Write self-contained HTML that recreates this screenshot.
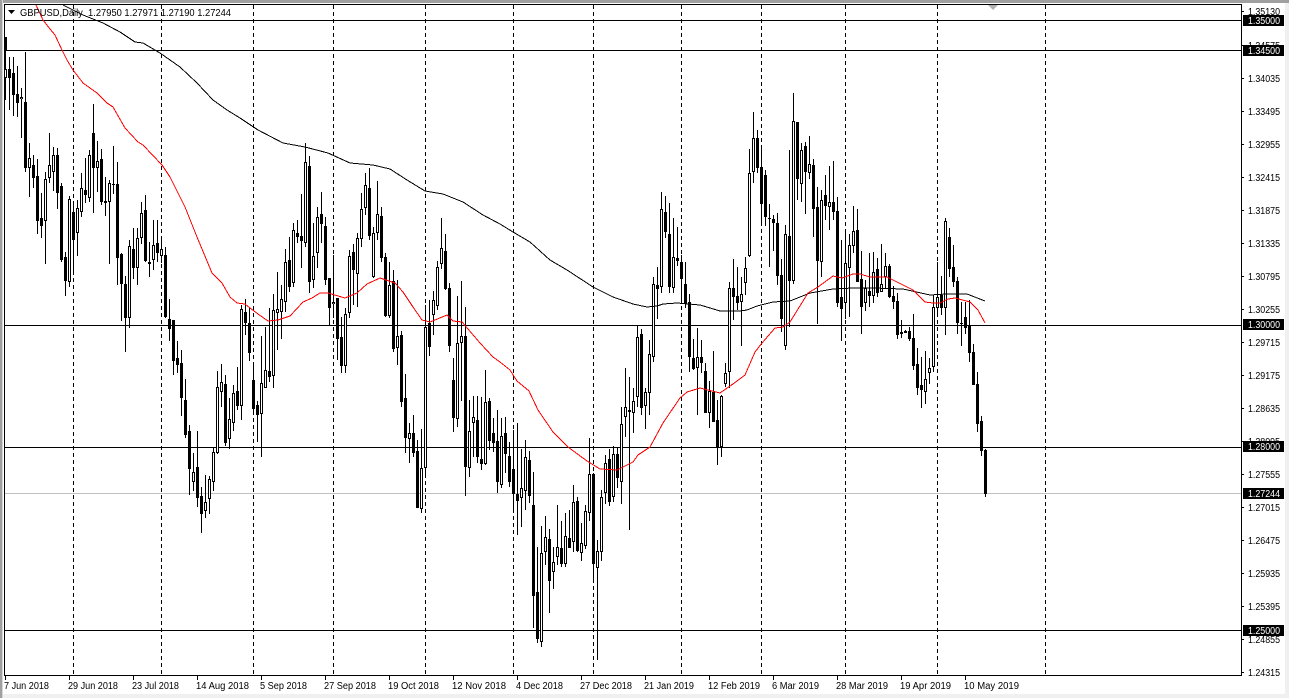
<!DOCTYPE html>
<html><head><meta charset="utf-8"><title>GBPUSD,Daily</title>
<style>
html,body{margin:0;padding:0;background:#fff;width:1289px;height:698px;overflow:hidden}
svg{display:block;position:absolute;left:0;top:0}
text{font-family:"Liberation Sans",Arial,sans-serif;font-size:10px;fill:#000}
.l text{fill:#fff}
</style></head><body>
<svg width="1289" height="698" viewBox="0 0 1289 698" xmlns="http://www.w3.org/2000/svg">
<rect width="1289" height="698" fill="#fff"/>
<rect x="0" y="694" width="1289" height="4" fill="#f0f0f0"/>
<rect x="1285" y="0" width="4" height="698" fill="#f0f0f0"/>
<rect x="0" y="0" width="1289" height="3" fill="#a0a0a0"/>
<rect x="0" y="0" width="2" height="698" fill="#a0a0a0"/>
<rect x="2" y="0" width="1" height="698" fill="#d8d8d8"/>

<g shape-rendering="crispEdges">
<!-- vertical dashed grid -->
<path transform="translate(.5,0)" fill="none" stroke="#000" stroke-width="1" stroke-dasharray="4 3" d="M73 5V675M161 5V675M253 5V675M333 5V675M425 5V675M513 5V675M593 5V675M681 5V675M761 5V675M845 5V675M937 5V675M1045 5V675"/>
<!-- horizontal levels -->
<rect x="5" y="493" width="1237" height="1" fill="#c0c0c0"/>
<rect x="5" y="20" width="1237" height="1" fill="#000"/>
<rect x="5" y="50" width="1237" height="1" fill="#000"/>
<rect x="5" y="325" width="1237" height="1" fill="#000"/>
<rect x="5" y="447" width="1237" height="1" fill="#000"/>
<rect x="5" y="630" width="1237" height="1" fill="#000"/>

<g transform="translate(.5,0)" fill="none" stroke="#000">
<!-- wicks -->
<path stroke-width="1" d="M5 37V100M9 57V110M13 57V116M17 66V117M21 88V138M25 52V172M29 143V197M33 155V188M37 159V234M41 193V238M45 172V264M49 133V183M53 147V191M57 148V209M61 183V262M65 252V296M69 196V287M73 203V271M77 200V256M81 173V217M85 158V203M89 150V202M93 104V213M97 141V192M101 149V205M105 177V216M109 180V264M113 146V194M117 162V285M121 253V321M125 276V352M129 240V328M133 228V279M137 228V285M141 202V244M145 195V262M149 242V277M153 220V270M157 220V262M161 237V263M165 247V318M169 299V341M173 320V375M177 341V373M181 350V416M185 379V438M189 425V495M193 453V491M197 431V507M201 487V533M205 475V518M209 476V514M213 447V491M217 371V454M221 364V407M225 375V446M229 398V449M233 385V431M237 367V410M241 305V420M245 299V335M249 307V361M253 363V415M257 401V442M261 336V457M265 327V388M269 308V382M273 294V388M277 272V350M281 285V339M285 249V312M289 237V292M293 223V287M297 220V243M301 194V268M305 143V247M309 156V293M313 223V288M317 207V268M321 192V243M325 217V285M329 278V325M333 255V318M337 298V360M341 317V373M345 308V373M349 250V318M353 244V305M357 233V307M361 193V247M365 173V215M369 168V240M373 227V278M377 181V240M381 207V262M385 253V317M389 262V318M393 270V352M397 280V365M401 331V407M405 374V453M409 423V463M413 415V457M417 440V508M421 429V513M425 305V477M429 300V356M433 291V335M437 261V310M441 218V269M445 234V290M449 283V352M453 358V432M457 296V427M461 281V401M465 307V496M469 400V477M473 396V457M477 396V463M481 397V470M485 370V465M489 398V450M493 418V452M497 410V493M501 418V488M505 417V473M509 442V487M513 430V511M517 423V535M521 449V527M525 440V510M529 451V503M533 472V628M537 547V643M541 526V647M545 516V565M549 529V613M553 547V589M557 505V565M561 521V567M565 513V567M569 510V548M573 485V552M577 497V552M581 523V561M585 505V549M589 438V521M593 473V583M597 540V660M601 490V561M605 455V504M609 449V506M613 446V502M617 448V488M621 407V504M625 368V437M629 377V530M633 388V433M637 326V407M641 329V415M645 388V429M649 340V415M653 277V362M657 267V319M661 192V293M665 196V238M669 203V293M673 218V293M677 227V266M681 255V301M685 262V308M689 294V372M693 339V370M697 328V415M701 340V373M705 363V413M709 381V428M713 351V422M717 400V465M721 395V457M725 363V387M729 282V388M733 259V320M737 267V310M741 277V346M745 257V295M749 149V257M753 112V183M757 130V173M761 148V223M765 170V226M769 204V267M773 215V251M777 213V285M781 259V332M785 225V350M789 150V327M793 93V284M797 122V200M801 143V202M805 142V214M809 136V179M813 159V237M817 187V324M821 190V277M825 175V220M829 166V230M833 161V220M837 197V307M841 240V341M845 233V319M849 234V317M853 206V253M857 209V282M861 251V334M865 280V311M869 253V307M873 252V303M877 258V297M881 244V292M885 253V288M889 264V298M893 286V309M897 293V339M901 320V338M905 330V333M909 327V341M913 314V370M917 348V395M921 357V408M925 351V404M929 358V384M933 295V372M937 262V313M941 276V315M945 218V335M949 228V277M953 245V287M957 277V334M961 302V346M965 302V334M969 300V362M973 344V385M977 372V432M981 416V456M985 449V497"/>
<!-- filled bodies -->
<path stroke-width="3" d="M9 69V78M13 73V95M17 94V103M25 102V168M33 165V178M37 176V221M41 218V226M57 155V193M61 186V260M65 257V281M73 212V240M85 190V195M93 133V168M101 159V202M105 201V203M113 184V185M117 184V258M121 254V284M125 284V318M133 249V268M145 210V261M149 262V264M157 243V253M165 255V317M169 319V329M173 320V361M177 358V365M181 363V398M185 400V435M189 431V469M197 467V498M201 496V514M225 384V443M237 391V406M245 312V323M249 323V353M253 380V409M257 405V415M269 371V377M289 260V287M297 233V237M301 236V241M309 166V282M321 214V224M325 226V280M329 278V308M337 298V339M341 337V366M353 252V270M369 188V236M381 216V258M385 257V316M393 281V349M401 335V402M405 398V438M413 433V453M417 451V508M429 323V347M445 251V289M449 288V346M453 380V418M465 336V467M477 420V457M481 459V464M489 401V441M493 433V443M497 441V482M505 433V454M509 456V482M513 469V494M517 494V501M529 460V496M533 505V596M537 592V639M549 539V581M561 548V564M569 538V548M577 501V551M593 474V564M609 459V502M617 454V478M629 410V412M641 334V408M657 285V289M665 212V232M669 234V287M677 258V261M681 262V279M685 284V304M689 302V357M693 358V369M701 357V363M705 371V413M713 392V422M717 420V448M733 288V297M737 296V303M757 138V168M761 167V204M765 175V217M769 218V219M773 219V223M777 223V276M781 275V319M789 236V281M797 122V179M805 146V172M813 165V209M817 207V261M825 195V206M833 202V212M837 211V303M841 297V309M857 230V282M861 279V307M869 291V296M877 269V293M889 266V297M893 296V302M897 301V335M901 332V334M905 331V333M909 331V339M913 338V366M917 364V388M921 385V390M941 295V308M949 237V269M953 267V282M957 281V323M961 323V324M965 317V328M969 326V353M973 352V385M977 384V424M981 421V451M985 450V494"/>
<!-- hollow body outline -->
<path stroke-width="3" d="M5 69V78M21 97V99M29 158V168M45 179V221M49 165V178M53 155V172M69 199V282M77 208V233M81 188V212M89 155V198M97 161V168M109 183V202M129 246V318M137 238V268M141 213V238M153 245V260M161 249V256M193 472V482M205 502V511M209 479V499M213 452V482M217 387V453M221 382V392M229 419V439M233 393V423M241 309V406M261 383V414M265 370V388M273 310V376M277 309V313M281 299V312M285 262V302M293 230V283M305 162V243M313 256V280M317 217V253M333 302V304M345 314V366M349 256V313M357 238V274M361 209V239M365 185V208M373 233V277M377 214V233M389 285V316M397 336V348M409 433V439M421 468V509M425 327V468M433 300V315M437 267V306M441 248V264M457 343V419M461 336V343M469 431V468M473 417V423M485 402V464M501 436V485M521 488V498M525 457V491M541 553V642M545 537V552M553 562V572M557 547V557M565 536V564M573 502V542M581 543V553M585 511V546M589 474V513M597 551V568M601 497V552M605 463V493M613 454V497M621 424V482M625 407V417M633 401V413M637 337V397M645 392V406M649 354V393M653 284V357M661 209V287M673 257V288M697 357V368M709 391V413M721 396V447M725 373V384M729 288V372M741 294V302M745 268V283M749 173V256M753 138V172M785 234V346M793 121V281M801 150V184M809 164V173M821 200V262M829 202V207M845 263V303M849 245V268M853 231V246M865 288V303M873 272V296M881 284V292M885 266V277M925 379V392M929 368V373M933 307V367M937 297V308M945 221V308"/>
<!-- hollow body interior -->
<path stroke="#fff" stroke-width="1" d="M5 70V77M21 98V98.5M29 159V167M45 180V220M49 166V177M53 156V171M69 200V281M77 209V232M81 189V211M89 156V197M97 162V167M109 184V201M129 247V317M137 239V267M141 214V237M153 246V259M161 250V255M193 473V481M205 503V510M209 480V498M213 453V481M217 388V452M221 383V391M229 420V438M233 394V422M241 310V405M261 384V413M265 371V387M273 311V375M277 310V312M281 300V311M285 263V301M293 231V282M305 163V242M313 257V279M317 218V252M333 303V303.5M345 315V365M349 257V312M357 239V273M361 210V238M365 186V207M373 234V276M377 215V232M389 286V315M397 337V347M409 434V438M421 469V508M425 328V467M433 301V314M437 268V305M441 249V263M457 344V418M461 337V342M469 432V467M473 418V422M485 403V463M501 437V484M521 489V497M525 458V490M541 554V641M545 538V551M553 563V571M557 548V556M565 537V563M573 503V541M581 544V552M585 512V545M589 475V512M597 552V567M601 498V551M605 464V492M613 455V496M621 425V481M625 408V416M633 402V412M637 338V396M645 393V405M649 355V392M653 285V356M661 210V286M673 258V287M697 358V367M709 392V412M721 397V446M725 374V383M729 289V371M741 295V301M745 269V282M749 174V255M753 139V171M785 235V345M793 122V280M801 151V183M809 165V172M821 201V261M829 203V206M845 264V302M849 246V267M853 232V245M865 289V302M873 273V295M881 285V291M885 267V276M925 380V391M929 369V372M933 308V366M937 298V307M945 222V307"/>
</g>
<rect x="4" y="37" width="3" height="13" fill="#000"/>
</g>

<!-- moving averages -->
<polyline shape-rendering="crispEdges" fill="none" stroke="#000" stroke-width="1" points="63,5 83,15 103,23 120,32 135,42 143,43 160,53 180,67 197,83 213,100 227,110 240,118 258,130 283,143 305,147 328,153 350,163 373,165 390,169 407,180 425,191 443,194 463,202 483,215 500,224 513,232 530,242 550,260 567,270 593,287 613,297 633,304 647,307 657,306 663,304 677,303 700,305 720,311 740,311 747,310 757,306 773,302 790,301 810,293 833,289 853,288 873,288 903,289 930,295 947,294 967,294 985,301"/>
<polyline shape-rendering="crispEdges" fill="none" stroke="#f00" stroke-width="1" points="36,5 43,20 50,29 55,35 62,50 67,60 73,70 83,83 97,93 107,103 113,107 125,128 138,142 143,145 162,165 170,177 185,207 197,237 212,273 222,283 230,297 237,303 245,304 250,308 258,314 268,321 278,320 290,316 303,302 312,298 320,293 328,293 345,298 357,293 367,284 380,278 395,283 403,292 413,307 422,320 430,322 447,315 453,321 462,322 480,343 493,357 500,362 510,370 517,381 529,391 538,410 553,432 568,447 587,461 600,469 617,470 633,462 638,455 650,447 663,423 680,398 687,392 700,388 720,393 733,384 745,375 755,352 762,343 775,328 783,327 790,322 808,293 818,287 833,276 842,278 853,274 860,274 870,277 887,277 913,290 925,302 933,303 940,303 948,299 955,298 970,302 978,310 985,323"/>

<!-- frame -->
<g shape-rendering="crispEdges" fill="#000">
<rect x="4" y="4" width="1238" height="1"/>
<rect x="4" y="4" width="1" height="672"/>
<rect x="1241" y="4" width="1" height="672"/>
<rect x="4" y="675" width="1238" height="1"/>
<!-- price ticks -->
<path stroke="#000" stroke-width="1" fill="none" d="M1242 11.5h2M1242 45.5h2M1242 78.5h2M1242 111.5h2M1242 144.5h2M1242 177.5h2M1242 210.5h2M1242 243.5h2M1242 276.5h2M1242 309.5h2M1242 342.5h2M1242 375.5h2M1242 408.5h2M1242 441.5h2M1242 474.5h2M1242 507.5h2M1242 540.5h2M1242 573.5h2M1242 606.5h2M1242 639.5h2M1242 672.5h2"/>
<!-- time ticks -->
<path stroke="#000" stroke-width="1" fill="none" d="M5.5 676v4M69.5 676v4M133.5 676v4M197.5 676v4M261.5 676v4M325.5 676v4M389.5 676v4M453.5 676v4M517.5 676v4M581.5 676v4M645.5 676v4M709.5 676v4M773.5 676v4M837.5 676v4M901.5 676v4M965.5 676v4"/>
</g>
<polygon points="988,5 998,5 993,10" fill="#b0b0b0"/>

<!-- header -->
<polygon points="8,10 15,10 11.5,14" fill="#000"/>
<text x="20" y="16" textLength="211" lengthAdjust="spacingAndGlyphs" xml:space="preserve">GBPUSD,Daily  1.27950 1.27971 1.27190 1.27244</text>

<!-- price axis -->
<g>
<text x="1248" y="15" textLength="32" lengthAdjust="spacingAndGlyphs">1.35130</text>
<text x="1248" y="49" textLength="32" lengthAdjust="spacingAndGlyphs">1.34575</text>
<text x="1248" y="82" textLength="32" lengthAdjust="spacingAndGlyphs">1.34035</text>
<text x="1248" y="115" textLength="32" lengthAdjust="spacingAndGlyphs">1.33495</text>
<text x="1248" y="148" textLength="32" lengthAdjust="spacingAndGlyphs">1.32955</text>
<text x="1248" y="181" textLength="32" lengthAdjust="spacingAndGlyphs">1.32415</text>
<text x="1248" y="214" textLength="32" lengthAdjust="spacingAndGlyphs">1.31875</text>
<text x="1248" y="247" textLength="32" lengthAdjust="spacingAndGlyphs">1.31335</text>
<text x="1248" y="280" textLength="32" lengthAdjust="spacingAndGlyphs">1.30795</text>
<text x="1248" y="313" textLength="32" lengthAdjust="spacingAndGlyphs">1.30255</text>
<text x="1248" y="346" textLength="32" lengthAdjust="spacingAndGlyphs">1.29715</text>
<text x="1248" y="379" textLength="32" lengthAdjust="spacingAndGlyphs">1.29175</text>
<text x="1248" y="412" textLength="32" lengthAdjust="spacingAndGlyphs">1.28635</text>
<text x="1248" y="445" textLength="32" lengthAdjust="spacingAndGlyphs">1.28095</text>
<text x="1248" y="478" textLength="32" lengthAdjust="spacingAndGlyphs">1.27555</text>
<text x="1248" y="511" textLength="32" lengthAdjust="spacingAndGlyphs">1.27015</text>
<text x="1248" y="544" textLength="32" lengthAdjust="spacingAndGlyphs">1.26475</text>
<text x="1248" y="577" textLength="32" lengthAdjust="spacingAndGlyphs">1.25935</text>
<text x="1248" y="610" textLength="32" lengthAdjust="spacingAndGlyphs">1.25395</text>
<text x="1248" y="643" textLength="32" lengthAdjust="spacingAndGlyphs">1.24855</text>
<text x="1248" y="676" textLength="32" lengthAdjust="spacingAndGlyphs">1.24315</text>
</g>
<!-- black level labels -->
<g fill="#000" shape-rendering="crispEdges">
<rect x="1243" y="15" width="41" height="11"/>
<rect x="1243" y="45" width="41" height="11"/>
<rect x="1243" y="319" width="41" height="11"/>
<rect x="1243" y="441" width="41" height="11"/>
<rect x="1243" y="488" width="41" height="11"/>
<rect x="1243" y="625" width="41" height="11"/>
</g>
<g class="l">
<text x="1248" y="24" textLength="32" lengthAdjust="spacingAndGlyphs">1.35000</text>
<text x="1248" y="54" textLength="32" lengthAdjust="spacingAndGlyphs">1.34500</text>
<text x="1248" y="328" textLength="32" lengthAdjust="spacingAndGlyphs">1.30000</text>
<text x="1248" y="450" textLength="32" lengthAdjust="spacingAndGlyphs">1.28000</text>
<text x="1248" y="497" textLength="32" lengthAdjust="spacingAndGlyphs">1.27244</text>
<text x="1248" y="634" textLength="32" lengthAdjust="spacingAndGlyphs">1.25000</text>
</g>

<!-- date axis -->
<g>
<text x="4" y="689" textLength="45" lengthAdjust="spacingAndGlyphs">7 Jun 2018</text>
<text x="68" y="689" textLength="50" lengthAdjust="spacingAndGlyphs">29 Jun 2018</text>
<text x="132" y="689" textLength="47" lengthAdjust="spacingAndGlyphs">23 Jul 2018</text>
<text x="196" y="689" textLength="53" lengthAdjust="spacingAndGlyphs">14 Aug 2018</text>
<text x="260" y="689" textLength="47" lengthAdjust="spacingAndGlyphs">5 Sep 2018</text>
<text x="324" y="689" textLength="52" lengthAdjust="spacingAndGlyphs">27 Sep 2018</text>
<text x="388" y="689" textLength="51" lengthAdjust="spacingAndGlyphs">19 Oct 2018</text>
<text x="452" y="689" textLength="54" lengthAdjust="spacingAndGlyphs">12 Nov 2018</text>
<text x="516" y="689" textLength="47" lengthAdjust="spacingAndGlyphs">4 Dec 2018</text>
<text x="580" y="689" textLength="52" lengthAdjust="spacingAndGlyphs">27 Dec 2018</text>
<text x="644" y="689" textLength="50" lengthAdjust="spacingAndGlyphs">21 Jan 2019</text>
<text x="708" y="689" textLength="52" lengthAdjust="spacingAndGlyphs">12 Feb 2019</text>
<text x="772" y="689" textLength="47" lengthAdjust="spacingAndGlyphs">6 Mar 2019</text>
<text x="836" y="689" textLength="52" lengthAdjust="spacingAndGlyphs">28 Mar 2019</text>
<text x="900" y="689" textLength="51" lengthAdjust="spacingAndGlyphs">19 Apr 2019</text>
<text x="964" y="689" textLength="55" lengthAdjust="spacingAndGlyphs">10 May 2019</text>
</g>
</svg>
</body></html>
